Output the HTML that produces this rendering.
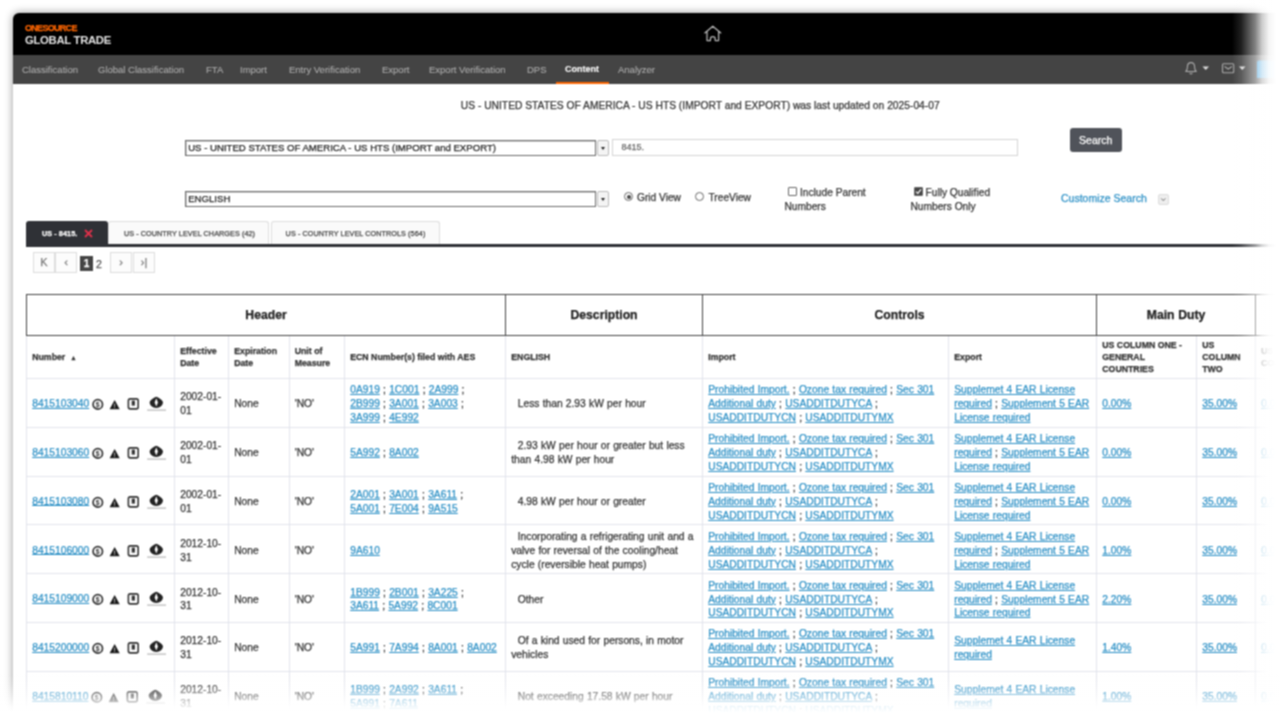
<!DOCTYPE html>
<html><head><meta charset="utf-8"><title>ONESOURCE Global Trade</title>
<style>
*{box-sizing:border-box;margin:0;padding:0}
html,body{width:1280px;height:720px;overflow:hidden;background:#fff;font-family:"Liberation Sans",sans-serif;color:#333}
#win{position:absolute;left:13px;top:13px;width:1300px;height:740px;background:#fff;border-top-left-radius:6px;overflow:hidden;box-shadow:0 0 8px rgba(0,0,0,.42);filter:url(#soft);-webkit-text-stroke:.25px}
#win>*{position:absolute}
.hdr{left:0;top:0;width:100%;height:42px;background:#000}
.nav{left:0;top:42px;width:100%;height:29px;background:#444}
.logo1{left:12px;top:10.2px;font-size:9px;font-weight:bold;color:#f60;letter-spacing:-.7px}
.logo2{left:12px;top:20.7px;font-size:11.3px;font-weight:bold;color:#e4e4e4;letter-spacing:-.3px;-webkit-text-stroke:0}
.nav span{-webkit-text-stroke:.1px;position:absolute;top:9.4px;font-size:9.5px;color:#acacac;white-space:nowrap}
.nav span.act{color:#fff;font-weight:bold;font-size:9px}
.nav i{position:absolute;left:543px;top:27px;width:53px;height:2px;background:#f60}
.t{white-space:nowrap;font-size:10.27px;color:#333}
.s{white-space:nowrap;font-size:10.2px;color:#333;line-height:14px}
.sel{border:1px solid #6a6a6a;box-shadow:inset 1px 1px 0 #ccc;height:15.6px;background:#fff;font-size:9.6px;line-height:13.6px;padding-left:2.2px;white-space:nowrap;color:#222}
.arr{border:1px solid #bbb;background:#f4f4f4;width:12px;height:16px;border-radius:2px}
.arr:after{content:"";position:absolute;left:3px;top:6px;border:2.5px solid transparent;border-top:3px solid #222}
.inp{border:1px solid #d4d4d4;height:17px;font-size:9px;line-height:15px;padding-left:8.5px;color:#666}
.btn{background:#50535a;color:#fff;font-size:10.5px;text-align:center;border-radius:3px;line-height:24px}
.rb{width:9px;height:9px;border:1px solid #666;border-radius:50%;background:#fff}
.rb.on:after{content:"";position:absolute;left:1.5px;top:1.5px;width:4px;height:4px;border-radius:50%;background:#444}
.cb{width:9px;height:9px;border:1px solid #666;background:#fff;border-radius:1px}
.cb.on{background:#444}
.tab{height:25px;top:207.5px;font-size:7.2px;line-height:23.5px;text-align:center;color:#444;background:#fafafa;border:1px solid #ddd;border-bottom:none;border-radius:3px 3px 0 0;white-space:nowrap;letter-spacing:.1px}
.tab.on{background:#2f3136;color:#fff;font-weight:bold;border-color:#2f3136}
.tabline{left:13px;top:231px;width:1300px;height:2.5px;background:#2f3136}
.pg{top:239.4px;height:21px;width:22px;border:1px solid #ddd;background:#fcfcfc;color:#777;font-size:11px;line-height:19px;text-align:center}
table{border-collapse:collapse;table-layout:fixed;left:13px;top:281px;width:1290px}
td,th{border:1px solid #e2e4ec;font-size:10.25px;word-spacing:.4px;line-height:13.9px;padding:2.4px 5.2px 0;vertical-align:middle;color:#333;text-align:left;overflow:hidden}
tr{height:48.86px}
tr.g{height:40.5px}
tr.g th{padding-top:1.5px;border:1.5px solid #444;font-size:12.2px;text-align:center;color:#222}
tr.h{height:43.4px}
tr.h th{font-size:8.75px;line-height:12px;color:#333;padding:1px 5.2px 0;word-spacing:0}
a{color:#2a8fc5;text-decoration:underline}
td.num{white-space:nowrap}
.ic{vertical-align:middle;margin-left:.6px;position:relative;top:0px}
</style></head><body>
<svg width="0" height="0" style="position:absolute"><filter id="soft" x="-2%" y="-4%" width="104%" height="108%" color-interpolation-filters="sRGB"><feConvolveMatrix order="3" kernelMatrix="1 2 1 2 4 2 1 2 1" divisor="16" edgeMode="duplicate" preserveAlpha="false"/></filter></svg>
<div id="win">
<div class="hdr"></div>
<div class="logo1">ONESOURCE</div>
<div class="logo2">GLOBAL TRADE</div>
<svg style="left:690px;top:11px" width="20" height="20" viewBox="0 0 20 20"><path d="M1.8 8.9 L9.8 2.2 L17.8 8.9 M4 7.4 V16.6 H7.4 V15 a2.4 2.4 0 0 1 4.8 0 V16.6 H15.6 V7.4" fill="none" stroke="#b8b8b8" stroke-width="1.25" stroke-linejoin="round" stroke-linecap="round"/></svg>
<div class="nav">
<span style="left:9px">Classification</span><span style="left:85px">Global Classification</span><span style="left:193px">FTA</span><span style="left:227px">Import</span><span style="left:276px">Entry Verification</span><span style="left:369px">Export</span><span style="left:416px">Export Verification</span><span style="left:514px">DPS</span><span class="act" style="left:552px">Content</span><span style="left:605px">Analyzer</span><i></i>
<svg style="position:absolute;left:1170px;top:3.2px" width="100" height="20" viewBox="0 0 100 20"><path d="M2.8 13.5 H13.2 C11.6 12.2 11.6 11 11.6 9 C11.6 6 10.2 4.6 8 4.6 C5.8 4.6 4.4 6 4.4 9 C4.4 11 4.4 12.2 2.8 13.5 Z M6.8 14.8 a1.2 1.2 0 0 0 2.4 0" fill="none" stroke="#aaa" stroke-width="1.1" stroke-linejoin="round"/><path d="M19.5 8.5 H26 L22.75 12 Z" fill="#ddd"/><rect x="39.5" y="5.8" width="11.2" height="9" rx="1" fill="none" stroke="#aaa" stroke-width="1.1"/><path d="M41.5 8.5 L45.25 11 L49 8.5" fill="none" stroke="#aaa" stroke-width="1.1"/><path d="M56 8.5 H62.5 L59.25 12 Z" fill="#ddd"/><rect x="74" y="2.5" width="30" height="19" rx="2" fill="#2a94d6"/></svg>
</div>
<div class="t" style="left:447.8px;top:86.5px">US - UNITED STATES OF AMERICA - US HTS (IMPORT and EXPORT) was last updated on 2025-04-07</div>
<div class="sel" style="left:172px;top:127px;width:411px">US - UNITED STATES OF AMERICA - US HTS (IMPORT and EXPORT)</div>
<div class="arr" style="left:584px;top:127px"></div>
<div class="inp" style="left:599px;top:126px;width:406px">8415.</div>
<div class="btn" style="left:1056.5px;top:115px;width:52.5px;height:24px">Search</div>
<div class="sel" style="left:172px;top:178.2px;width:411px">ENGLISH</div>
<div class="arr" style="left:584px;top:178px"></div>
<div class="rb on" style="left:611px;top:179px"></div><div class="s" style="left:624px;top:178px">Grid View</div>
<div class="rb" style="left:682px;top:179px"></div><div class="s" style="left:695.5px;top:178px">TreeView</div>
<div class="cb" style="left:775px;top:173.8px"></div><div class="s" style="left:787px;top:172.5px">Include Parent</div><div class="s" style="left:771.5px;top:187px">Numbers</div>
<div class="cb on" style="left:900.8px;top:173.6px"><svg width="9" height="9" viewBox="0 0 9 9" style="position:absolute;left:-1px;top:-1px"><path d="M2 4.6 L3.8 6.4 L7 2.4" fill="none" stroke="#fff" stroke-width="1.3"/></svg></div><div class="s" style="left:912.5px;top:172.5px">Fully Qualified</div><div class="s" style="left:897.5px;top:187px">Numbers Only</div>
<div class="s" style="left:1048px;top:178px;color:#2a8fc5;font-size:10.5px">Customize Search</div>
<div style="left:1145px;top:181px;width:10.5px;height:10.5px;border:1px solid #ddd;border-radius:2px;background:#eee"><svg width="9" height="9" viewBox="0 0 9 9" style="position:absolute;left:0;top:0"><path d="M2.3 3.5 L4.3 5.6 L6.3 3.5" fill="none" stroke="#666" stroke-width="1"/></svg></div>
<div class="tab on" style="left:13px;width:82px;text-align:left;padding-left:15px">US - 8415. <svg width="9" height="9" viewBox="0 0 9 9" style="vertical-align:-2px;margin-left:5px"><path d="M1 1 L8 8 M8 1 L1 8" stroke="#e0304a" stroke-width="1.9"/></svg></div>
<div class="tab" style="left:95px;width:161px;padding-left:2px">US - COUNTRY LEVEL CHARGES (42)</div>
<div class="tab" style="left:258px;width:169px">US - COUNTRY LEVEL CONTROLS (564)</div>
<div class="tabline"></div>
<div class="pg" style="left:20px">K</div><div class="pg" style="left:42px">&lsaquo;</div>
<div style="left:67px;top:243px;width:13px;height:15px;background:#444;color:#fff;font-size:10px;font-weight:bold;line-height:15px;text-align:center">1</div>
<div class="s" style="left:83px;top:244px;font-size:10.5px;color:#555">2</div>
<div class="pg" style="left:97px">&rsaquo;</div><div class="pg" style="left:120px">&rsaquo;|</div>
<table>
<colgroup><col style="width:148px"><col style="width:54px"><col style="width:60.5px"><col style="width:55.5px"><col style="width:161px"><col style="width:197px"><col style="width:246px"><col style="width:148px"><col style="width:100px"><col style="width:59px"><col style="width:61px"></colgroup>
<tr class="g"><th colspan="5">Header</th><th>Description</th><th colspan="2">Controls</th><th colspan="2">Main Duty</th><th></th></tr>
<tr class="h"><th>Number <span style="font-size:6.5px;margin-left:2.5px;position:relative;top:.5px">&#9650;</span></th><th>Effective Date</th><th>Expiration Date</th><th>Unit of Measure</th><th>ECN Number(s) filed with AES</th><th>ENGLISH</th><th>Import</th><th>Export</th><th>US COLUMN ONE - GENERAL COUNTRIES</th><th>US COLUMN TWO</th><th>US COLUMN</th></tr>
<tr><td class="num"><a>8415103040</a><svg class="ic" width="78" height="18" viewBox="0 0 78 18"><circle cx="7.8" cy="9.4" r="4.7" fill="#fff" stroke="#333" stroke-width="1.7"/><text x="7.8" y="11.9" font-size="7" font-weight="bold" text-anchor="middle" fill="#333" font-family="Liberation Sans, sans-serif">$</text><path d="M19.6 14.3 L24.65 4.9 L29.7 14.3 Z" fill="#1a1a1a"/><rect x="24.25" y="8.6" width=".8" height="3" fill="#ddd"/><rect x="24.25" y="12.2" width=".8" height=".9" fill="#ddd"/><rect x="38.4" y="3.9" width="9.8" height="10" rx="1.8" fill="#fff" stroke="#333" stroke-width="1.6"/><rect x="41.7" y="5.6" width="3.2" height="5" fill="#333"/><path d="M66.3 1.8 C70 3.3 72.9 5.4 72.9 7.6 C72.9 10.6 69.9 13 66.3 13 C62.7 13 59.7 10.6 59.7 7.6 C59.7 5.4 62.6 3.3 66.3 1.8 Z" fill="#222"/><path d="M66.3 3.2 L67.9 7.4 L66.3 11.6 L64.7 7.4 Z" fill="#fff"/><rect x="57.2" y="14.5" width="18.8" height="1.2" fill="#b5b5b5"/></svg></td><td style="white-space:nowrap">2002-01-<br>01</td><td>None</td><td>'NO'</td><td><a>0A919</a> ; <a>1C001</a> ; <a>2A999</a> ;<br><a>2B999</a> ; <a>3A001</a> ; <a>3A003</a> ;<br><a>3A999</a> ; <a>4E992</a></td><td>&nbsp;&nbsp;Less than 2.93 kW per hour</td><td><a>Prohibited Import.</a> ; <a>Ozone tax required</a> ; <a>Sec 301 Additional duty</a> ; <a>USADDITDUTYCA</a> ; <a>USADDITDUTYCN</a> ; <a>USADDITDUTYMX</a></td><td><a>Supplemet 4 EAR License required</a> ; <a>Supplement 5 EAR License required</a></td><td><a>0.00%</a></td><td><a>35.00%</a></td><td><a>0.00%</a></td></tr>
<tr><td class="num"><a>8415103060</a><svg class="ic" width="78" height="18" viewBox="0 0 78 18"><circle cx="7.8" cy="9.4" r="4.7" fill="#fff" stroke="#333" stroke-width="1.7"/><text x="7.8" y="11.9" font-size="7" font-weight="bold" text-anchor="middle" fill="#333" font-family="Liberation Sans, sans-serif">$</text><path d="M19.6 14.3 L24.65 4.9 L29.7 14.3 Z" fill="#1a1a1a"/><rect x="24.25" y="8.6" width=".8" height="3" fill="#ddd"/><rect x="24.25" y="12.2" width=".8" height=".9" fill="#ddd"/><rect x="38.4" y="3.9" width="9.8" height="10" rx="1.8" fill="#fff" stroke="#333" stroke-width="1.6"/><rect x="41.7" y="5.6" width="3.2" height="5" fill="#333"/><path d="M66.3 1.8 C70 3.3 72.9 5.4 72.9 7.6 C72.9 10.6 69.9 13 66.3 13 C62.7 13 59.7 10.6 59.7 7.6 C59.7 5.4 62.6 3.3 66.3 1.8 Z" fill="#222"/><path d="M66.3 3.2 L67.9 7.4 L66.3 11.6 L64.7 7.4 Z" fill="#fff"/><rect x="57.2" y="14.5" width="18.8" height="1.2" fill="#b5b5b5"/></svg></td><td style="white-space:nowrap">2002-01-<br>01</td><td>None</td><td>'NO'</td><td><a>5A992</a> ; <a>8A002</a></td><td>&nbsp;&nbsp;2.93 kW per hour or greater but less than 4.98 kW per hour</td><td><a>Prohibited Import.</a> ; <a>Ozone tax required</a> ; <a>Sec 301 Additional duty</a> ; <a>USADDITDUTYCA</a> ; <a>USADDITDUTYCN</a> ; <a>USADDITDUTYMX</a></td><td><a>Supplemet 4 EAR License required</a> ; <a>Supplement 5 EAR License required</a></td><td><a>0.00%</a></td><td><a>35.00%</a></td><td><a>0.00%</a></td></tr>
<tr><td class="num"><a>8415103080</a><svg class="ic" width="78" height="18" viewBox="0 0 78 18"><circle cx="7.8" cy="9.4" r="4.7" fill="#fff" stroke="#333" stroke-width="1.7"/><text x="7.8" y="11.9" font-size="7" font-weight="bold" text-anchor="middle" fill="#333" font-family="Liberation Sans, sans-serif">$</text><path d="M19.6 14.3 L24.65 4.9 L29.7 14.3 Z" fill="#1a1a1a"/><rect x="24.25" y="8.6" width=".8" height="3" fill="#ddd"/><rect x="24.25" y="12.2" width=".8" height=".9" fill="#ddd"/><rect x="38.4" y="3.9" width="9.8" height="10" rx="1.8" fill="#fff" stroke="#333" stroke-width="1.6"/><rect x="41.7" y="5.6" width="3.2" height="5" fill="#333"/><path d="M66.3 1.8 C70 3.3 72.9 5.4 72.9 7.6 C72.9 10.6 69.9 13 66.3 13 C62.7 13 59.7 10.6 59.7 7.6 C59.7 5.4 62.6 3.3 66.3 1.8 Z" fill="#222"/><path d="M66.3 3.2 L67.9 7.4 L66.3 11.6 L64.7 7.4 Z" fill="#fff"/><rect x="57.2" y="14.5" width="18.8" height="1.2" fill="#b5b5b5"/></svg></td><td style="white-space:nowrap">2002-01-<br>01</td><td>None</td><td>'NO'</td><td><a>2A001</a> ; <a>3A001</a> ; <a>3A611</a> ;<br><a>5A001</a> ; <a>7E004</a> ; <a>9A515</a></td><td>&nbsp;&nbsp;4.98 kW per hour or greater</td><td><a>Prohibited Import.</a> ; <a>Ozone tax required</a> ; <a>Sec 301 Additional duty</a> ; <a>USADDITDUTYCA</a> ; <a>USADDITDUTYCN</a> ; <a>USADDITDUTYMX</a></td><td><a>Supplemet 4 EAR License required</a> ; <a>Supplement 5 EAR License required</a></td><td><a>0.00%</a></td><td><a>35.00%</a></td><td><a>0.00%</a></td></tr>
<tr><td class="num"><a>8415106000</a><svg class="ic" width="78" height="18" viewBox="0 0 78 18"><circle cx="7.8" cy="9.4" r="4.7" fill="#fff" stroke="#333" stroke-width="1.7"/><text x="7.8" y="11.9" font-size="7" font-weight="bold" text-anchor="middle" fill="#333" font-family="Liberation Sans, sans-serif">$</text><path d="M19.6 14.3 L24.65 4.9 L29.7 14.3 Z" fill="#1a1a1a"/><rect x="24.25" y="8.6" width=".8" height="3" fill="#ddd"/><rect x="24.25" y="12.2" width=".8" height=".9" fill="#ddd"/><rect x="38.4" y="3.9" width="9.8" height="10" rx="1.8" fill="#fff" stroke="#333" stroke-width="1.6"/><rect x="41.7" y="5.6" width="3.2" height="5" fill="#333"/><path d="M66.3 1.8 C70 3.3 72.9 5.4 72.9 7.6 C72.9 10.6 69.9 13 66.3 13 C62.7 13 59.7 10.6 59.7 7.6 C59.7 5.4 62.6 3.3 66.3 1.8 Z" fill="#222"/><path d="M66.3 3.2 L67.9 7.4 L66.3 11.6 L64.7 7.4 Z" fill="#fff"/><rect x="57.2" y="14.5" width="18.8" height="1.2" fill="#b5b5b5"/></svg></td><td style="white-space:nowrap">2012-10-<br>31</td><td>None</td><td>'NO'</td><td><a>9A610</a></td><td>&nbsp;&nbsp;Incorporating a refrigerating unit and a valve for reversal of the cooling/heat cycle (reversible heat pumps)</td><td><a>Prohibited Import.</a> ; <a>Ozone tax required</a> ; <a>Sec 301 Additional duty</a> ; <a>USADDITDUTYCA</a> ; <a>USADDITDUTYCN</a> ; <a>USADDITDUTYMX</a></td><td><a>Supplemet 4 EAR License required</a> ; <a>Supplement 5 EAR License required</a></td><td><a>1.00%</a></td><td><a>35.00%</a></td><td><a>0.00%</a></td></tr>
<tr><td class="num"><a>8415109000</a><svg class="ic" width="78" height="18" viewBox="0 0 78 18"><circle cx="7.8" cy="9.4" r="4.7" fill="#fff" stroke="#333" stroke-width="1.7"/><text x="7.8" y="11.9" font-size="7" font-weight="bold" text-anchor="middle" fill="#333" font-family="Liberation Sans, sans-serif">$</text><path d="M19.6 14.3 L24.65 4.9 L29.7 14.3 Z" fill="#1a1a1a"/><rect x="24.25" y="8.6" width=".8" height="3" fill="#ddd"/><rect x="24.25" y="12.2" width=".8" height=".9" fill="#ddd"/><rect x="38.4" y="3.9" width="9.8" height="10" rx="1.8" fill="#fff" stroke="#333" stroke-width="1.6"/><rect x="41.7" y="5.6" width="3.2" height="5" fill="#333"/><path d="M66.3 1.8 C70 3.3 72.9 5.4 72.9 7.6 C72.9 10.6 69.9 13 66.3 13 C62.7 13 59.7 10.6 59.7 7.6 C59.7 5.4 62.6 3.3 66.3 1.8 Z" fill="#222"/><path d="M66.3 3.2 L67.9 7.4 L66.3 11.6 L64.7 7.4 Z" fill="#fff"/><rect x="57.2" y="14.5" width="18.8" height="1.2" fill="#b5b5b5"/></svg></td><td style="white-space:nowrap">2012-10-<br>31</td><td>None</td><td>'NO'</td><td><a>1B999</a> ; <a>2B001</a> ; <a>3A225</a> ;<br><a>3A611</a> ; <a>5A992</a> ; <a>8C001</a></td><td>&nbsp;&nbsp;Other</td><td><a>Prohibited Import.</a> ; <a>Ozone tax required</a> ; <a>Sec 301 Additional duty</a> ; <a>USADDITDUTYCA</a> ; <a>USADDITDUTYCN</a> ; <a>USADDITDUTYMX</a></td><td><a>Supplemet 4 EAR License required</a> ; <a>Supplement 5 EAR License required</a></td><td><a>2.20%</a></td><td><a>35.00%</a></td><td><a>0.00%</a></td></tr>
<tr><td class="num"><a>8415200000</a><svg class="ic" width="78" height="18" viewBox="0 0 78 18"><circle cx="7.8" cy="9.4" r="4.7" fill="#fff" stroke="#333" stroke-width="1.7"/><text x="7.8" y="11.9" font-size="7" font-weight="bold" text-anchor="middle" fill="#333" font-family="Liberation Sans, sans-serif">$</text><path d="M19.6 14.3 L24.65 4.9 L29.7 14.3 Z" fill="#1a1a1a"/><rect x="24.25" y="8.6" width=".8" height="3" fill="#ddd"/><rect x="24.25" y="12.2" width=".8" height=".9" fill="#ddd"/><rect x="38.4" y="3.9" width="9.8" height="10" rx="1.8" fill="#fff" stroke="#333" stroke-width="1.6"/><rect x="41.7" y="5.6" width="3.2" height="5" fill="#333"/><path d="M66.3 1.8 C70 3.3 72.9 5.4 72.9 7.6 C72.9 10.6 69.9 13 66.3 13 C62.7 13 59.7 10.6 59.7 7.6 C59.7 5.4 62.6 3.3 66.3 1.8 Z" fill="#222"/><path d="M66.3 3.2 L67.9 7.4 L66.3 11.6 L64.7 7.4 Z" fill="#fff"/><rect x="57.2" y="14.5" width="18.8" height="1.2" fill="#b5b5b5"/></svg></td><td style="white-space:nowrap">2012-10-<br>31</td><td>None</td><td>'NO'</td><td><a>5A991</a> ; <a>7A994</a> ; <a>8A001</a> ; <a>8A002</a></td><td>&nbsp;&nbsp;Of a kind used for persons, in motor vehicles</td><td><a>Prohibited Import.</a> ; <a>Ozone tax required</a> ; <a>Sec 301 Additional duty</a> ; <a>USADDITDUTYCA</a> ; <a>USADDITDUTYCN</a> ; <a>USADDITDUTYMX</a></td><td><a>Supplemet 4 EAR License required</a></td><td><a>1.40%</a></td><td><a>35.00%</a></td><td><a>0.00%</a></td></tr>
<tr><td class="num"><a>8415810110</a><svg class="ic" width="78" height="18" viewBox="0 0 78 18"><circle cx="7.8" cy="9.4" r="4.7" fill="#fff" stroke="#333" stroke-width="1.7"/><text x="7.8" y="11.9" font-size="7" font-weight="bold" text-anchor="middle" fill="#333" font-family="Liberation Sans, sans-serif">$</text><path d="M19.6 14.3 L24.65 4.9 L29.7 14.3 Z" fill="#1a1a1a"/><rect x="24.25" y="8.6" width=".8" height="3" fill="#ddd"/><rect x="24.25" y="12.2" width=".8" height=".9" fill="#ddd"/><rect x="38.4" y="3.9" width="9.8" height="10" rx="1.8" fill="#fff" stroke="#333" stroke-width="1.6"/><rect x="41.7" y="5.6" width="3.2" height="5" fill="#333"/><path d="M66.3 1.8 C70 3.3 72.9 5.4 72.9 7.6 C72.9 10.6 69.9 13 66.3 13 C62.7 13 59.7 10.6 59.7 7.6 C59.7 5.4 62.6 3.3 66.3 1.8 Z" fill="#222"/><path d="M66.3 3.2 L67.9 7.4 L66.3 11.6 L64.7 7.4 Z" fill="#fff"/><rect x="57.2" y="14.5" width="18.8" height="1.2" fill="#b5b5b5"/></svg></td><td style="white-space:nowrap">2012-10-<br>31</td><td>None</td><td>'NO'</td><td><a>1B999</a> ; <a>2A992</a> ; <a>3A611</a> ;<br><a>5A991</a> ; <a>7A611</a></td><td>&nbsp;&nbsp;Not exceeding 17.58 kW per hour</td><td><a>Prohibited Import.</a> ; <a>Ozone tax required</a> ; <a>Sec 301 Additional duty</a> ; <a>USADDITDUTYCA</a> ; <a>USADDITDUTYCN</a> ; <a>USADDITDUTYMX</a></td><td><a>Supplemet 4 EAR License required</a></td><td><a>1.00%</a></td><td><a>35.00%</a></td><td><a>0.00%</a></td></tr>
</table>
</div>
<div style="position:absolute;left:1229px;top:0;width:60px;height:720px;background:linear-gradient(to right,rgba(255,255,255,0) 3px,rgba(255,255,255,.12) 12px,rgba(255,255,255,.5) 26px,rgba(255,255,255,.8) 33px,rgba(255,255,255,.96) 40px,#fff 47px)"></div>
<div style="position:absolute;left:0;top:674px;width:1280px;height:60px;background:linear-gradient(to bottom,rgba(255,255,255,0),rgba(255,255,255,.15) 10px,rgba(255,255,255,.5) 22px,rgba(255,255,255,.9) 33px,#fff 39px)"></div>
</body></html>
